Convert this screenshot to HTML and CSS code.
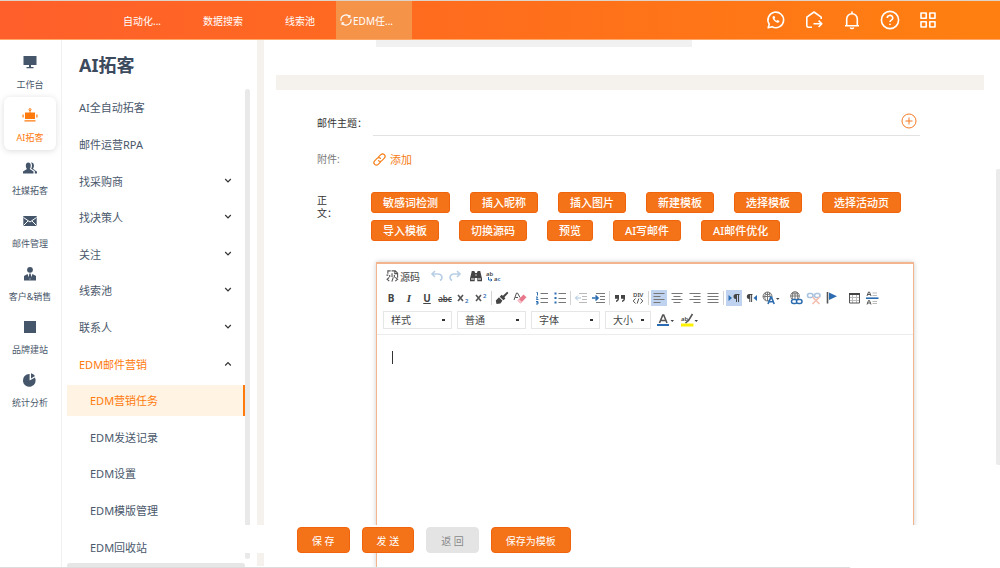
FILE: index.html
```html
<!DOCTYPE html>
<html lang="zh-CN">
<head>
<meta charset="utf-8">
<title>AI拓客</title>
<link rel="stylesheet" href="styles.css">
</head>
<body>
<header class="topbar">
  <nav class="tabs">
    <a class="tab" href="#">自动化...</a>
    <a class="tab" href="#">数据搜索</a>
    <a class="tab" href="#">线索池</a>
    <a class="tab tab-active" href="#">
      <svg class="tab-icon" viewBox="0 0 12 12"><path d="M1.100 7A5 5 0 0 1 9.700 2.600M10.900 5A5 5 0 0 1 2.300 9.400"/><path d="M9.900 1v2.200H7.800M2.100 11V8.800h2.100"/></svg>
      EDM任...
    </a>
  </nav>
  <div class="actions">
    <button class="action" aria-label="WhatsApp"><svg viewBox="0 0 20 20"><path d="M2.200 17.800l1-3.700a7.800 7.800 0 1 1 2.900 2.700z"/><path d="M7 6.300c-.8 1-.5 2.500 1 4.200s3.600 2.800 5.200 1.700l.3-1.200-1.900-1-1 .8c-1-.4-1.700-1.100-2.100-2.100l.7-.9-.8-1.800z" class="solid"/></svg></button>
    <button class="action" aria-label="退出"><svg viewBox="0 0 20 20"><path d="M8 17.300H4.300a1.500 1.500 0 0 1-1.500-1.500V7.200L10 2l7.200 5.200V9"/><path d="M9.500 13.800h8M14.600 10.600l3.200 3.200-3.200 3.200"/></svg></button>
    <button class="action" aria-label="通知"><svg viewBox="0 0 20 20"><path d="M3 15.700h14M4.700 15.500V9a5.300 5.300 0 0 1 10.600 0v6.500M10 3.500V1.600M8.300 17.500a1.800 1.500 0 0 0 3.400 0"/></svg></button>
    <button class="action" aria-label="帮助"><svg viewBox="0 0 20 20"><circle cx="10" cy="10" r="8.600"/><path d="M7.300 8a2.700 2.500 0 1 1 4 2.100c-.9.500-1.300.9-1.300 1.900"/><path d="M10 13.700v1.400"/></svg></button>
    <button class="action" aria-label="应用"><svg viewBox="0 0 20 20"><path d="M3 3h5.200v5.200H3zM11.800 3H17v5.200h-5.200zM3 11.800h5.200V17H3zM11.800 11.800H17V17h-5.200z"/></svg></button>
  </div>
</header>

<div class="layout">
  <nav class="rail">
    <a class="rail-item" href="#"><svg viewBox="0 0 16 16"><path d="M1.500 2h13v9h-13zM7 11h2v2H7zM4.500 13h7v1.200h-7z"/></svg><span>工作台</span></a>
    <a class="rail-item rail-active" href="#"><svg viewBox="0 0 16 16"><path d="M3 5.500h10V12H3zM7.500 3h1v3h-1zM.500 7.500h1.200v3H.500zM14.300 7.500h1.200v3h-1.200zM2.500 13.200h11v1.200h-11z"/><circle cx="8" cy="2.600" r="1" fill="none" stroke="currentColor"/></svg><span>AI拓客</span></a>
    <a class="rail-item" href="#"><svg viewBox="0 0 16 16"><path d="M1 13.500v-2L5 9C3.300 7 3.300 2.500 6.300 2.500S9.300 7 7.700 9l3.800 2.500v2z"/><path d="M9 2.600c3-.5 3.800 3.600 2 6.200l4 3v1.700h-2.200v-2.500L9.200 8.800c1.200-2.300 1-4.600-.2-6.200z"/></svg><span>社媒拓客</span></a>
    <a class="rail-item" href="#"><svg viewBox="0 0 16 16"><path d="M1.300 3h13.400v10H1.300z"/><path class="cut" d="M1.500 4.500L8 9l6.500-4.500M1.500 12.500L6 8M14.500 12.500L10 8"/></svg><span>邮件管理</span></a>
    <a class="rail-item" href="#"><svg viewBox="0 0 16 16"><circle cx="8" cy="3.800" r="2.900"/><path d="M2 14.500V10l3.500-2L8 14l2.500-6L14 10v4.500z"/><path d="M7.300 7.500h1.400l.6 4L8 13.500l-1.300-2z"/></svg><span>客户&amp;销售</span></a>
    <a class="rail-item" href="#"><svg viewBox="0 0 16 16"><path d="M2 2h12v12H2z"/></svg><span>品牌建站</span></a>
    <a class="rail-item" href="#"><svg viewBox="0 0 16 16"><path d="M7.600 2v6.600L13 5.500A6.400 6.400 0 1 1 7.600 2z"/><path d="M9 1.300a6.200 6.200 0 0 1 4 2.700L9 6.400z"/></svg><span>统计分析</span></a>
  </nav>

  <aside class="sidebar">
    <h1 class="side-title">AI拓客</h1>
    <nav class="menu">
      <a class="menu-item" href="#">AI全自动拓客</a>
      <a class="menu-item" href="#">邮件运营RPA</a>
      <a class="menu-item" href="#">找采购商<svg class="chev" viewBox="0 0 8 8"><path d="M1.200 2L4 4.800 6.800 2"/></svg></a>
      <a class="menu-item" href="#">找决策人<svg class="chev" viewBox="0 0 8 8"><path d="M1.200 2L4 4.800 6.800 2"/></svg></a>
      <a class="menu-item" href="#">关注<svg class="chev" viewBox="0 0 8 8"><path d="M1.200 2L4 4.800 6.800 2"/></svg></a>
      <a class="menu-item" href="#">线索池<svg class="chev" viewBox="0 0 8 8"><path d="M1.200 2L4 4.800 6.800 2"/></svg></a>
      <a class="menu-item" href="#">联系人<svg class="chev" viewBox="0 0 8 8"><path d="M1.200 2L4 4.800 6.800 2"/></svg></a>
      <a class="menu-item menu-open" href="#">EDM邮件营销<svg class="chev" viewBox="0 0 8 8"><path d="M1.200 5.500L4 2.700l2.800 2.800"/></svg></a>
      <a class="menu-item menu-sub menu-current" href="#"><span>EDM营销任务</span></a>
      <a class="menu-item menu-sub" href="#">EDM发送记录</a>
      <a class="menu-item menu-sub" href="#">EDM设置</a>
      <a class="menu-item menu-sub" href="#">EDM模版管理</a>
      <a class="menu-item menu-sub" href="#">EDM回收站</a>
    </nav>
    <div class="side-scroll-y"></div>
    <div class="side-scroll-x"></div>
  </aside>
  <div class="divider"></div>

  <main class="main">
    <div class="field-edge"></div>
    <div class="band"></div>
    <form class="form">
      <div class="row">
        <label class="label label-subject" for="subject">邮件主题：</label>
        <div class="subject">
          <input id="subject" class="subject-input" type="text">
          <button class="add-var" type="button" aria-label="插入变量"><svg viewBox="0 0 16 16"><circle cx="8" cy="8" r="7"/><path d="M8 4.500v7M4.500 8h7"/></svg></button>
        </div>
      </div>
      <div class="row row-attach">
        <span class="label label-muted">附件:</span>
        <button class="attach" type="button"><svg viewBox="0 0 14 14"><path d="M6 4.200l2.400-2.400a2.600 2.600 0 0 1 3.800 3.800L9.600 8.200a2.600 2.600 0 0 1-3.700 0"/><path d="M8 9.800l-2.400 2.400a2.600 2.600 0 0 1-3.800-3.800l2.600-2.600a2.600 2.600 0 0 1 3.700 0"/></svg>添加</button>
      </div>
      <div class="row row-body">
        <span class="label label-body">正<br>文：</span>
        <div class="body-col">
          <div class="tools">
            <button class="tool" type="button">敏感词检测</button>
            <button class="tool" type="button">插入昵称</button>
            <button class="tool" type="button">插入图片</button>
            <button class="tool" type="button">新建模板</button>
            <button class="tool" type="button">选择模板</button>
            <button class="tool" type="button">选择活动页</button>
            <button class="tool" type="button">导入模板</button>
            <button class="tool" type="button">切换源码</button>
            <button class="tool" type="button">预览</button>
            <button class="tool" type="button">AI写邮件</button>
            <button class="tool" type="button">AI邮件优化</button>
          </div>
          <div class="editor">
            <div class="toolbar">
              <div class="bar bar-top">
                <button class="source" type="button"><svg viewBox="0 0 14 14"><path d="M5 1.500H2v3M2.500 6H.500M6 1.500h4L12.500 4v5M9.500 1.500V4.500h3M4 6v2M6.500 4v4M9 6v2.500M3.500 8.500L1.200 10.500l2.300 2M10 8.500l2.500 2-2.500 2M7.800 8.500l-1.500 4.500"/></svg>源码</button>
                <div class="group group-undo">
                  <button class="ed soft" type="button" aria-label="撤销"><svg viewBox="0 0 14 14"><path d="M5 2L2 5l3 3M2.300 5H8a4 3.500 0 0 1 2 6.500" class="thick"/></svg></button>
                  <button class="ed soft" type="button" aria-label="重做"><svg viewBox="0 0 14 14"><path d="M9 2l3 3-3 3M11.700 5H6a4 3.500 0 0 0-2 6.500" class="thick"/></svg></button>
                </div>
                <div class="group group-find">
                  <button class="ed" type="button" aria-label="查找"><svg viewBox="0 0 14 14"><path class="fill" d="M2.800 2h2.500l.9 2h1.600l.9-2h2.500L13 9.500v2.800H8.300V9H5.700v3.300H1V9.500z"/><path class="white" d="M2 10h3M9 10h3M6.300 6h1.400"/></svg></button>
                  <button class="ed" type="button" aria-label="替换"><svg viewBox="0 0 14 14"><text x="-1" y="6.500" class="t6">ab</text><text x="7" y="12" class="t6">a<tspan class="blue">c</tspan></text><path class="blue-s" d="M1.500 8v3h3.500M3.700 9.700L5 11l-1.300 1.300"/></svg></button>
                </div>
              </div>
              <div class="bar">
                <div class="group">
                  <button class="ed txt" type="button"><b>B</b></button>
                  <button class="ed txt italic" type="button"><b>I</b></button>
                  <button class="ed txt" type="button"><b><u>U</u></b></button>
                  <button class="ed txt small" type="button"><s>abc</s></button>
                  <button class="ed" type="button" aria-label="下标"><svg viewBox="0 0 14 14"><path class="thick" d="M2 4l5 6M7 4l-5 6"/><text x="9" y="12" class="t6 blue">2</text></svg></button>
                  <button class="ed" type="button" aria-label="上标"><svg viewBox="0 0 14 14"><path class="thick" d="M2 4l5 6M7 4l-5 6"/><text x="9" y="6.500" class="t6 blue">2</text></svg></button>
                </div>
                <span class="sep"></span>
                <div class="group">
                  <button class="ed" type="button" aria-label="格式刷"><svg viewBox="0 0 14 14"><path class="fill" d="M12.200.800l1.200 1.100-4 4.400 1 1.200-2 1.800-3.700-3.600 1.900-1.900 1.300.9zM4 6.300l3.400 3.400-2 2.800L1.500 13 .800 9.500z"/></svg></button>
                  <button class="ed" type="button" aria-label="清除格式"><svg viewBox="0 0 14 14"><path class="pink" d="M4.500 9.500l6-6 3 2.800-6 6.200z"/><path class="pale" d="M4.500 9.500l1.500-1.500 3 3-1.500 1.500z"/><path d="M1 9l2.500-7h1L7 6.500M2.200 6.500H5"/></svg></button>
                </div>
                <div class="group group-list">
                  <button class="ed" type="button" aria-label="编号列表"><svg class="lines" viewBox="0 0 14 14"><path d="M5.500 2.500H13M5.500 7.500H13M5.500 11.500H13"/><path class="blue-s" d="M1.500 1.500h1v3M1 6h1.500L1.500 8.500H3.500M1 10.500h2v2.500H1M1.500 11.700h1.500"/></svg></button>
                  <button class="ed" type="button" aria-label="项目列表"><svg class="lines" viewBox="0 0 14 14"><path d="M5.500 2.500H13M5.500 7.500H13M5.500 11.500H13"/><path class="blue-f" d="M1.500 1.500h2v2h-2zM1.500 6h2v2h-2zM1.500 10.500h2v2h-2z"/></svg></button>
                </div>
                <span class="sep"></span>
                <div class="group">
                  <button class="ed faded" type="button" aria-label="减少缩进"><svg viewBox="0 0 14 14"><path d="M5 2.500h8M8 5.500h5M8 8.500h5M5 11.500h8"/><path class="blue-s" d="M7 7H1.500M4 4.500L1.500 7 4 9.500"/></svg></button>
                  <button class="ed" type="button" aria-label="增加缩进"><svg class="lines" viewBox="0 0 14 14"><path d="M4 2.500h9M8 5.500h5M8 8.500h5M4 11.500h9"/><path class="blue-s thick" d="M0 7h5.500M3.500 4.500L6 7 3.500 9.500"/></svg></button>
                </div>
                <span class="sep"></span>
                <div class="group">
                  <button class="ed" type="button" aria-label="引用"><svg viewBox="0 0 14 14"><path class="fill" d="M2 4h4v3.500c0 2-1 3-3 3.500V9.500c1 0 1.500-.7 1.500-1.700H2zM8 4h4v3.500c0 2-1 3-3 3.500V9.500c1 0 1.500-.7 1.500-1.700H8z"/></svg></button>
                  <button class="ed" type="button" aria-label="DIV"><svg viewBox="0 0 14 14"><text x="2" y="6" class="t6">DIV</text><path d="M4.500 7.500L2.200 10l2.300 2.500M9.500 7.500l2.300 2.500-2.300 2.500M7.800 7.500l-1.600 5"/></svg></button>
                </div>
                <span class="sep"></span>
                <div class="group">
                  <button class="ed on" type="button" aria-label="左对齐"><svg class="lines" viewBox="0 0 14 14"><path d="M1.500 2.500h11M1.500 5.500h7M1.500 8.500h11M1.500 11.500h7"/></svg></button>
                  <button class="ed" type="button" aria-label="居中"><svg class="lines" viewBox="0 0 14 14"><path d="M1.500 2.500h11M3.500 5.500h7M1.500 8.500h11M3.500 11.500h7"/></svg></button>
                  <button class="ed" type="button" aria-label="右对齐"><svg class="lines" viewBox="0 0 14 14"><path d="M1.500 2.500h11M5.500 5.500h7M1.500 8.500h11M5.500 11.500h7"/></svg></button>
                  <button class="ed" type="button" aria-label="两端对齐"><svg class="lines" viewBox="0 0 14 14"><path d="M1.500 2.500h11M1.500 5.500h11M1.500 8.500h11M1.500 11.500h11"/></svg></button>
                </div>
                <span class="sep"></span>
                <div class="group">
                  <button class="ed on" type="button" aria-label="从左到右"><svg viewBox="0 0 14 14"><path class="blue-f" d="M1.500 4v6L5 7z"/><path class="fill" d="M12.500 3H9a2.500 2.500 0 0 0 0 5v3h1V4h1v7h1V4h.5z"/></svg></button>
                  <button class="ed" type="button" aria-label="从右到左"><svg viewBox="0 0 14 14"><path class="fill" d="M7.500 3H4.300a2.500 2.500 0 0 0 0 5v3h1V4h.8v7h1V4h.4z"/><path class="blue-f" d="M12 4v6L8.500 7z"/></svg></button>
                </div>
                <button class="ed lang" type="button" aria-label="语言"><svg class="lines" viewBox="0 0 18 14"><circle cx="5.500" cy="5.500" r="4.500"/><path d="M1 5.500h8M5.500 1v9M2.500 2.500C4 4 7 4 8.500 2.500M3.500 9C2.500 7 2.500 4 4 1.500M8 5c0-1.500-.3-2.500-1-3.500"/><path class="blue-s thick" d="M6 13l2.800-7h.6l2.800 7M7.200 10.700h4"/><path class="fill" d="M14 7h3.500L15.800 9z"/></svg></button>
                <div class="group group-link">
                  <button class="ed" type="button" aria-label="链接"><svg class="lines" viewBox="0 0 14 14"><circle cx="6" cy="5" r="4.300"/><path d="M1.700 5h8.600M6 .700v8.600M3 2c1.500 1.300 4.500 1.300 6 0M4 8.500C3 6 3 4 4.500 1M8 8.500C9 6 9 4 7.500 1"/><rect class="link-ring" x="2.500" y="8.500" width="5.500" height="4" rx="2"/><rect class="link-ring" x="7.500" y="8.500" width="5.500" height="4" rx="2"/></svg></button>
                  <button class="ed faded" type="button" aria-label="取消链接"><svg viewBox="0 0 14 14"><rect class="blue-s thick" x="0.500" y="2.500" width="5.500" height="4" rx="2"/><rect class="blue-s thick" x="7.500" y="2.500" width="5.500" height="4" rx="2"/><path class="red-s" d="M5.500 6l7 7M12.500 6l-7 7"/></svg></button>
                  <button class="ed" type="button" aria-label="锚点"><svg viewBox="0 0 14 14"><path class="thick" d="M2.500 1v11.500"/><path class="blue-f" d="M4 1.500l8 3.700L4 9z"/></svg></button>
                </div>
                <div class="group group-list">
                  <button class="ed" type="button" aria-label="表格"><svg viewBox="0 0 14 14"><path class="light" d="M2 6.500h10.500M2 9.500h10.500M5.500 4v8M9.500 4v8"/><path d="M2.500 3h10v9h-10z"/><path class="fill" d="M2 2h11v2H2z"/></svg></button>
                  <button class="ed" type="button" aria-label="水平线"><svg viewBox="0 0 14 14"><path d="M2 5l1.500-4h1L6 5M2.500 3.500h3M2 13.500l1.500-4h1L6 13.500M2.500 12h3"/><path class="light" d="M7.500 2H12M7.500 4.500H12M7.500 10.500H12M7.500 12.500H12"/><path class="blue-s thick" d="M1 7.200h12.500"/></svg></button>
                </div>
              </div>
              <div class="bar bar-selects">
                <select class="pick" aria-label="样式"><option>样式</option></select>
                <select class="pick" aria-label="格式"><option>普通</option></select>
                <select class="pick" aria-label="字体"><option>字体</option></select>
                <select class="pick pick-size" aria-label="大小"><option>大小</option></select>
                <button class="ed lang" type="button" aria-label="文字颜色"><svg viewBox="0 0 18 14"><path class="thick" d="M2.500 10l3.300-8h.9L10 10M4 7.500h4.500"/><path class="blue-f" d="M0 11h12v2H0z"/><path class="fill" d="M13.500 7H17l-1.700 2z"/></svg></button>
                <button class="ed lang" type="button" aria-label="背景颜色"><svg viewBox="0 0 18 14"><path class="yellow" d="M0 10.500h12.500v3H0z"/><text x="0" y="7.500" class="t6">ab</text><path class="thick" d="M11.500 1L7.500 7.500 4.500 10"/><path class="fill" d="M13.500 7H17l-1.700 2z"/></svg></button>
              </div>
            </div>
            <div class="canvas"><span class="caret"></span></div>
          </div>
        </div>
      </div>
    </form>
    <div class="main-scroll"></div>
  </main>

  <footer class="footer">
    <button class="foot" type="button">保 存</button>
    <button class="foot" type="button">发 送</button>
    <button class="foot foot-gray" type="button">返 回</button>
    <button class="foot" type="button">保存为模板</button>
  </footer>
  <div class="page-scroll"></div>
</div>
</body>
</html>
```

FILE: styles.css
```css
* {
  box-sizing: border-box;
}

body {
  margin: 0;
  height: 100vh;
  display: flex;
  flex-direction: column;
  overflow: hidden;
  background: #fff;
  color: #4a586b;
  font-family: "Noto Sans", "Noto Sans CJK SC", sans-serif;
  font-size: 10px;
}

a {
  color: inherit;
  text-decoration: none;
}

button,
input,
select {
  margin: 0;
  padding: 0;
  border: 0;
  background: none;
  color: inherit;
  font: inherit;
}

svg {
  display: block;
  flex: none;
  overflow: visible;
}

/* Top bar */
.topbar {
  flex: none;
  height: 40px;
  display: flex;
  justify-content: space-between;
  border-top: 1px solid #ddd3c8;
  border-bottom: 1px solid #ffa867;
  background: linear-gradient(90deg, #ff5f2b, #ff6e1c 50%, #ff8010);
  color: #fff;
}

.tabs {
  display: flex;
  padding-left: 102px;
}

.tab {
  display: flex;
  align-items: center;
  padding: 0 21px;
  white-space: nowrap;
}

.tab-active {
  gap: 1px;
  width: 76px;
  padding: 0 4px;
  background: #f59349;
}

.tab-icon {
  width: 12px;
  height: 12px;
  fill: none;
  stroke: #fff;
  stroke-width: 1.2;
}

.actions {
  display: flex;
  align-items: center;
  gap: 18px;
  padding-right: 62px;
}

.action svg {
  width: 20px;
  height: 20px;
  fill: none;
  stroke: #fff;
  stroke-width: 1.6;
  stroke-linejoin: round;
}

.action .solid {
  fill: #fff;
  stroke: none;
}

/* Page columns */
.layout {
  position: relative;
  flex: 1;
  min-height: 0;
  display: grid;
  grid-template-columns: 62px 195px 7px 1fr;
}

.rail {
  display: flex;
  flex-direction: column;
  padding: 4px 5px 0 4px;
  border-right: 1px solid #f1f1f1;
  font-size: 9px;
}

.rail-item {
  display: flex;
  flex-direction: column;
  align-items: center;
  gap: 7px;
  padding: 10px 0 4px;
  border-radius: 6px;
  line-height: 16px;
  white-space: nowrap;
}

.rail-item svg {
  width: 16px;
  height: 16px;
  fill: #45556a;
}

.rail-item .cut {
  fill: none;
  stroke: #fff;
}

.rail-active {
  color: #ff7a0c;
  box-shadow: 0 1px 6px rgba(0, 0, 0, 0.14);
}

.rail-active svg {
  fill: #ff7a0c;
}

.sidebar {
  position: relative;
  display: flex;
  flex-direction: column;
  min-height: 0;
  padding: 0 12px 3px 5px;
}

.side-title {
  margin: 0;
  padding: 11px 0 10px 12px;
  color: #3c4a5e;
  font-size: 18px;
  line-height: 28px;
}

.menu {
  flex: 1;
  display: grid;
  grid-auto-rows: 1fr;
  font-size: 11px;
}

.menu-item {
  display: flex;
  align-items: center;
  justify-content: space-between;
  padding: 0 13px 0 12px;
  white-space: nowrap;
}

.menu-open {
  color: #ff7a0c;
}

.menu-sub {
  padding: 0 0 0 23px;
}

.menu-current {
  padding: 0;
  color: #ff7a0c;
}

.menu-current span {
  flex: 1;
  padding-left: 23px;
  border-right: 2px solid #ff7a0c;
  background: #fff4e4;
  line-height: 31px;
}

.chev {
  width: 8px;
  height: 8px;
  fill: none;
  stroke: #333;
  stroke-width: 1.2;
}

.side-scroll-y {
  position: absolute;
  top: 49px;
  right: 7px;
  bottom: 9px;
  width: 5px;
  border-radius: 3px;
  background: #e9e9e9;
}

.side-scroll-x {
  position: absolute;
  left: 5px;
  right: 12px;
  bottom: 0;
  height: 5px;
  border-radius: 3px;
  background: #e6e6e6;
}

.divider {
  margin-bottom: 2px;
  background: #f5f2ed;
}

/* Main form */
.main {
  position: relative;
  min-width: 0;
  min-height: 0;
  display: flex;
  flex-direction: column;
}

.field-edge {
  width: 43%;
  height: 7px;
  margin-left: 112px;
  background: #f2f1f1;
}

.band {
  height: 15px;
  margin: 28px 16px 0 12px;
  background: #f5f2ed;
}

.form {
  flex: 1;
  min-height: 0;
  display: flex;
  flex-direction: column;
  padding: 14px 80px 0 53px;
}

.row {
  display: grid;
  grid-template-columns: 54px 1fr;
}

.label {
  color: #333;
  line-height: 13px;
  white-space: nowrap;
}

.label-subject {
  padding-top: 13px;
}

.label-muted {
  color: #777;
}

.subject {
  display: flex;
  align-items: center;
  gap: 8px;
  height: 32px;
  margin-left: 2px;
  padding: 3px 3px 0 0;
  border-bottom: 1px solid #e2e2e2;
}

.subject-input {
  flex: 1;
  min-width: 0;
  height: 24px;
  outline: 0;
}

.add-var svg {
  width: 16px;
  height: 16px;
  fill: none;
  stroke: #f47a25;
}

.row-attach {
  align-items: center;
  height: 24px;
  margin-top: 11px;
}

.attach {
  display: flex;
  align-items: center;
  gap: 4px;
  padding-left: 2px;
  color: #f57c14;
  font-size: 11px;
}

.attach svg {
  width: 13px;
  height: 13px;
  fill: none;
  stroke: #f57c14;
  stroke-width: 1.2;
  stroke-linecap: round;
}

.row-body {
  flex: 1;
  min-height: 0;
  margin-top: 21px;
}

.label-body {
  padding-top: 2px;
}

.body-col {
  min-height: 0;
  display: flex;
  flex-direction: column;
}

.tools {
  display: flex;
  flex-wrap: wrap;
  gap: 7px 20px;
}

.tool {
  height: 21px;
  padding: 0 11px;
  border: 1px solid #f0640c;
  border-radius: 3px;
  background: #f47319;
  color: #fff;
  font-size: 11px;
  font-weight: 500;
  line-height: 18px;
  white-space: nowrap;
}

.editor {
  flex: 1;
  margin: 21px 6px 0 5px;
  border: solid #f3b58d;
  border-width: 2px 1px 0;
  box-shadow: 0 0 5px rgba(0, 0, 0, 0.2);
}

.toolbar {
  display: flex;
  flex-direction: column;
  gap: 4px;
  padding: 3px 6px 5px;
  border-bottom: 1px solid #ececec;
}

.bar {
  display: flex;
  align-items: center;
  height: 18px;
}

.source {
  display: flex;
  align-items: center;
  gap: 1px;
  padding-left: 3px;
  color: #444;
}

.source svg,
.ed svg {
  height: 14px;
  fill: none;
  stroke: #555;
}

.source svg {
  width: 13px;
  stroke-width: 1.2;
}

.ed .lines {
  stroke: #777;
}

.group {
  display: flex;
  gap: 2px;
}

.group-undo {
  margin-left: 9px;
}

.group-find {
  margin-left: 5px;
}

.group-list {
  margin-left: 6px;
}

.group-link {
  margin-left: 8px;
}

.sep {
  width: 1px;
  height: 14px;
  margin: 0 2px;
  background: #d4d4d4;
}

.ed {
  display: flex;
  align-items: center;
  justify-content: center;
  width: 16px;
  height: 16px;
  color: #444;
}

.on {
  background: #bfd2f0;
}

.faded {
  opacity: 0.4;
}

.lang {
  width: 18px;
  margin-left: 2px;
}

.txt {
  font-family: "Noto Sans", sans-serif;
}

.italic {
  font-family: "Liberation Serif", serif;
  font-size: 11px;
  font-style: italic;
}

.small {
  font-size: 8px;
  font-weight: 600;
}

.ed .thick {
  stroke-width: 1.6;
}

.soft .thick {
  stroke: #b9cfe6;
}

.ed .fill {
  fill: #444;
  stroke: none;
}

.ed .white {
  stroke: #fff;
}

.ed .light {
  stroke: #bbb;
}

.ed .blue-s {
  stroke: #2b6cb0;
}

.ed .blue-f {
  fill: #2b6cb0;
  stroke: none;
}

.ed .red-s {
  stroke: #e8603c;
  stroke-width: 1.6;
}

.ed .link-ring {
  fill: #fff;
  stroke: #2b6cb0;
  stroke-width: 1.5;
}

.ed .pink {
  fill: #e8798c;
  stroke: none;
}

.ed .pale {
  fill: #f6c3cb;
  stroke: none;
}

.ed .yellow {
  fill: #fff200;
  stroke: none;
}

.ed text {
  fill: #444;
  stroke: none;
  font-family: "Noto Sans", sans-serif;
  font-weight: 600;
}

.ed .blue {
  fill: #2b6cb0;
}

.t6 {
  font-size: 6px;
}

.bar-selects {
  gap: 5px;
}

.bar-selects .lang {
  margin-left: 1px;
}

.pick {
  appearance: none;
  width: 69px;
  height: 18px;
  padding: 0 7px;
  border: 1px solid #e6e6e6;
  background: linear-gradient(#333, #333) right 6px center / 3px 2px no-repeat;
  color: #444;
}

.pick-size {
  width: 46px;
}

.canvas {
  padding: 16px 15px;
}

.caret {
  display: block;
  width: 1px;
  height: 13px;
  background: #333;
}

.main-scroll {
  position: absolute;
  top: 129px;
  right: 0;
  width: 4px;
  height: 56%;
  border-radius: 2px 0 0 2px;
  background: #ebebeb;
}

/* Action strip that floats over the columns */
.footer {
  position: absolute;
  left: 240px;
  right: 0;
  bottom: 15px;
  display: flex;
  gap: 12px;
  padding: 2px 0 0 57px;
  background: #fff;
}

.footer::after {
  content: "";
  position: absolute;
  top: 100%;
  right: 0;
  width: 50%;
  height: 15px;
  background: #fff;
}

.foot {
  height: 26px;
  padding: 0 14px;
  border: 1px solid #f0640c;
  border-radius: 4px;
  background: #f47319;
  color: #fff;
  white-space: nowrap;
}

.foot-gray {
  border-color: #e4e4e4;
  background: #e4e4e4;
  color: #888;
}

.page-scroll {
  position: absolute;
  left: 0;
  bottom: 0;
  width: 85%;
  height: 1px;
  background: #dcdcdc;
}
```
